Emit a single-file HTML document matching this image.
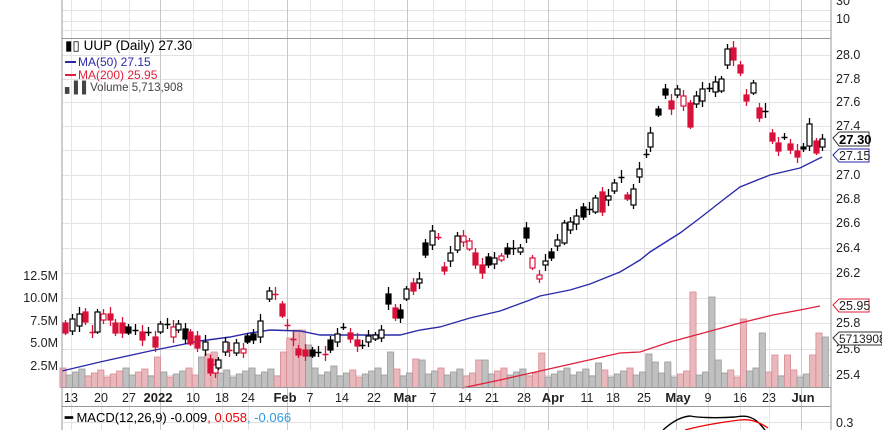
<!DOCTYPE html>
<html><head><meta charset="utf-8">
<style>
html,body{margin:0;padding:0;background:#fff;}
body{width:882px;height:430px;overflow:hidden;position:relative;font-family:"Liberation Sans",Arial,sans-serif;}
svg{position:absolute;left:0;top:0;}
text{font-family:"Liberation Sans",Arial,sans-serif;}
</style></head><body>
<svg id="s" width="882" height="430" viewBox="0 0 882 430" xmlns="http://www.w3.org/2000/svg">
<rect width="882" height="430" fill="#fff"/>
<g id="grid"></g>
<g id="vol"></g>
<polyline fill="none" stroke="#2a2aa8" stroke-width="1.4" points="62,371 100,362 150,351 200,341 230,337 250,333 270,330 300,331 320,335 350,335 380,335 400,335 420,330 440,327 470,318 500,311 530,300 540,296 570,290 590,284 620,272 640,260 650,252 680,233 700,218 723,200 740,187 770,175 800,168 822,157"/>
<polyline fill="none" stroke="#e0203c" stroke-width="1.3" points="462,388 500,380 540,371 580,362 620,353 640,352 670,342 707,332 740,323 773,315 800,310 820,306"/>
<g id="cand"></g>
<line x1="62" y1="0" x2="62" y2="430" stroke="#999"/>
<line x1="831" y1="0" x2="831" y2="430" stroke="#999"/>
<line x1="62" y1="38.5" x2="831" y2="38.5" stroke="#999"/>
<line x1="62" y1="387.5" x2="831" y2="387.5" stroke="#999"/>
<line x1="62" y1="406.5" x2="831" y2="406.5" stroke="#999"/>
<path d="M663,430 C672,422 680,417 690,416 C700,418 720,418 735,417 C745,415 752,416 760,424 L765,430" fill="none" stroke="#000" stroke-width="1.4"/>
<path d="M685,430 C700,426 715,423 740,420 C748,419 756,420 768,428" fill="none" stroke="#e00" stroke-width="1.3"/>
<g font-size="12.5">
<text x="65" y="50" fill="#000" font-size="13.5">▮▯ UUP (Daily) 27.30</text>
<line x1="65" y1="62" x2="76" y2="62" stroke="#2a2aa8" stroke-width="2"/>
<text x="78" y="66" fill="#2a2aa8" font-size="12">MA(50) 27.15</text>
<line x1="65" y1="75" x2="76" y2="75" stroke="#e0203c" stroke-width="2"/>
<text x="78" y="79" fill="#e0203c" font-size="12">MA(200) 25.95</text>
<text x="65" y="91" fill="#444" font-size="11.5">▖▌▌Volume 5,713,908</text>
</g>
<text x="65" y="422" font-size="13" fill="#000"><tspan font-weight="bold">━</tspan> MACD(12,26,9) -0.009<tspan fill="#e00">, 0.058</tspan><tspan fill="#3399dd">, -0.066</tspan></text>
<g font-size="12.5" fill="#222">
<text x="836" y="5">30</text><text x="836" y="23">10</text>
<text x="836" y="59">28.0</text><text x="836" y="83">27.8</text><text x="836" y="106">27.6</text><text x="836" y="130">27.4</text>
<text x="836" y="179">27.0</text><text x="836" y="203">26.8</text><text x="836" y="227">26.6</text><text x="836" y="252">26.4</text>
<text x="836" y="277">26.2</text><text x="836" y="327">25.8</text><text x="836" y="353">25.6</text><text x="836" y="379">25.4</text>
<text x="836" y="427">0.3</text>
</g>
<path d="M833,138 L839,132 L869,132 L869,146 L839,146 Z" fill="#fff" stroke="#333"/>
<text x="839" y="144" font-size="13" font-weight="bold">27.30</text>
<path d="M833,155 L839,149 L869,149 L869,162 L839,162 Z" fill="#fff" stroke="#2a2aa8"/>
<text x="839" y="160" font-size="12.5" fill="#222">27.15</text>
<path d="M833,305 L839,299 L869,299 L869,312 L839,312 Z" fill="#fff" stroke="#e0203c"/>
<text x="839" y="310" font-size="12.5" fill="#222">25.95</text>
<path d="M833,338 L839,332 L882,332 L882,345 L839,345 Z" fill="#fff" stroke="#333"/>
<text x="839" y="343" font-size="12" fill="#222">5713908</text>
<g font-size="12.5" fill="#222" text-anchor="end">
<text x="58" y="280">12.5M</text><text x="58" y="302">10.0M</text><text x="58" y="325">7.5M</text><text x="58" y="347">5.0M</text><text x="58" y="370">2.5M</text>
</g>
<g font-size="12.5" fill="#222" text-anchor="middle">
<text x="71" y="402">13</text><text x="101" y="402">20</text><text x="129" y="402">27</text>
<text x="158" y="402" font-weight="bold" font-size="13">2022</text>
<text x="193" y="402">10</text><text x="222" y="402">18</text><text x="248" y="402">24</text>
<text x="285" y="402" font-weight="bold" font-size="13">Feb</text>
<text x="310" y="402">7</text><text x="342" y="402">14</text><text x="374" y="402">22</text>
<text x="405" y="402" font-weight="bold" font-size="13">Mar</text>
<text x="433" y="402">7</text><text x="465" y="402">14</text><text x="492" y="402">21</text><text x="524" y="402">28</text>
<text x="553" y="402" font-weight="bold" font-size="13">Apr</text>
<text x="587" y="402">11</text><text x="613" y="402">18</text><text x="644" y="402">25</text>
<text x="678" y="402" font-weight="bold" font-size="13">May</text>
<text x="708" y="402">9</text><text x="740" y="402">16</text><text x="769" y="402">23</text>
<text x="803" y="402" font-weight="bold" font-size="13">Jun</text>
</g>
</svg>
<script>
(function(){
var NS="http://www.w3.org/2000/svg";
function el(p,n,a){var e=document.createElementNS(NS,n);for(var k in a)e.setAttribute(k,a[k]);p.appendChild(e);return e;}
var g=document.getElementById('grid');
[10,21,30,55,79,102,126,150,175,199,223,248,273,298,323,349,375,422].forEach(function(y){el(g,'line',{x1:62,x2:831,y1:y+.5,y2:y+.5,stroke:'#e2e2e2'});});
[71,101,129,193,222,248,310,342,374,433,465,492,524,587,613,644,708,740,769].forEach(function(x){el(g,'line',{x1:x+.5,x2:x+.5,y1:0,y2:430,stroke:'#e4e4e4'});});
[160,287,407,548,676,801].forEach(function(x){el(g,'line',{x1:x+.5,x2:x+.5,y1:0,y2:430,stroke:'#c8c8c8'});});
var C=[[65,328,5,'r'],[72,325,6,'h'],[79,320,6,'h'],[85,317,5,'r'],[92,332,1,'rc'],[97,322,10,'h'],[103,317,3,'rh'],[110,317,3,'r'],[115,328,5,'r'],[122,328,5,'r'],[128,330,3,'b'],[135,330,1,'c'],[142,336,4,'r'],[148,332,1,'c'],[155,342,5,'r'],[160,328,4,'h'],[167,324,1,'c'],[173,332,5,'rh'],[178,327,3,'h'],[185,334,5,'b'],[190,338,6,'r'],[197,342,6,'r'],[205,346,4,'h'],[210,366,7,'r'],[215,369,4,'rh'],[218,364,4,'h'],[225,347,5,'h'],[229,350,1,'rc'],[236,348,5,'h'],[243,351,2,'rh'],[247,339,3,'b'],[253,337,3,'b'],[260,329,8,'h'],[269,295,4,'h'],[275,294,1,'rc'],[282,310,6,'r'],[287,325,1,'rc'],[293,339,1,'rc'],[298,352,3,'r'],[305,353,3,'r'],[312,353,3,'b'],[318,352,1,'c'],[325,354,1,'rc'],[330,345,5,'b'],[337,338,4,'h'],[343,327,1,'c'],[350,336,3,'r'],[357,343,3,'r'],[362,345,1,'c'],[368,339,3,'h'],[375,337,2,'h'],[381,334,4,'h'],[388,299,5,'b'],[395,313,5,'r'],[400,314,4,'b'],[406,294,5,'h'],[413,287,4,'r'],[419,281,2,'h'],
[425,249,6,'b'],[432,238,7,'h'],[438,237,1,'rc'],[444,269,2,'r'],[450,257,4,'h'],[457,243,7,'h'],[463,239,3,'rh'],[469,245,4,'rh'],[475,259,6,'r'],[482,269,4,'r'],[488,261,4,'b'],[494,261,3,'h'],[501,258,2,'rh'],[507,251,3,'b'],[513,248,1,'c'],[520,250,2,'h'],[526,233,5,'b'],[532,263,5,'rh'],[539,277,2,'rh'],[545,263,2,'h'],[551,255,3,'b'],[557,243,3,'h'],[564,233,10,'h'],[570,226,4,'h'],[576,220,4,'h'],[583,212,5,'b'],[589,209,1,'c'],[595,205,7,'h'],[602,202,10,'r'],[608,198,2,'h'],[614,187,4,'h'],[621,177,1,'c'],[627,197,2,'r'],[633,197,8,'h'],[639,173,4,'h'],[646,154,1,'c'],
[650,140,7,'h'],[658,112,3,'b'],[665,92,3,'b'],[671,105,4,'r'],[677,92,3,'h'],[683,101,5,'rh'],[690,115,12,'r'],[696,100,4,'h'],[702,95,6,'h'],[709,88,1,'c'],[715,87,5,'h'],[721,85,6,'h'],[727,57,8,'h'],[733,54,6,'r'],[740,69,4,'r'],[746,98,3,'r'],[753,88,5,'h'],[759,113,5,'r'],[765,111,1,'c'],[772,137,4,'r'],[778,147,4,'r'],[784,137,1,'c'],[790,147,3,'r'],[797,154,3,'r'],[803,148,1,'b'],[809,135,11,'h'],[816,147,6,'r'],[822,143,4,'h']];
var V={160:357,165:372,203:357,210:354,215:352,283:352,290:338,295:330,302:330,308:345,333:366,388:352,418:359,425:360,482:360,541:353,601:363,652:354,658:362,669:362,690:292,714:297,720:360,746:319,760:333,775:355,787:355,812:355,818:333,823:337};
var vg=document.getElementById('vol');
for(var i=0;i<122;i++){var x=63+i*6.3;var vt=368+((i*37)%10);
 var best=null,bd=9;for(var k in V){var d=Math.abs(+k-x);if(d<bd){bd=d;best=k;}}
 if(best!==null&&bd<3.2)vt=V[best];
 var near=C[0],nd=99;for(var j=0;j<C.length;j++){var dd=Math.abs(C[j][0]-x);if(dd<nd){nd=dd;near=C[j];}}
 var red=near[3].charAt(0)=='r';
 el(vg,'rect',{x:x-3.1,y:vt,width:6.2,height:387.5-vt,fill:red?'#e9b8bd':'#c0c0c0',stroke:red?'#d88a92':'#9a9a9a','stroke-width':0.8});
}
var cg=document.getElementById('cand'),RED='#d8103a';
C.forEach(function(c,i){var x=c[0],y=c[1],h=c[2],t=c[3];var col=t.charAt(0)=='r'?RED:'#000';
 var ext=3+((i*7)%5);
 el(cg,'line',{x1:x+.5,x2:x+.5,y1:y-h-ext,y2:y+h+ext-1,stroke:col,'stroke-width':1.3});
 if(t=='c'||t=='rc'){el(cg,'line',{x1:x-2.5,x2:x+3.5,y1:y+.5,y2:y+.5,stroke:col,'stroke-width':1.5});}
 else{var fill=(t=='r'?RED:(t=='b'?'#000':'#fff'));el(cg,'rect',{x:x-2,y:y-h,width:5,height:Math.max(2*h,2),fill:fill,stroke:col,'stroke-width':1.2});}
});
})();
</script>
</body></html>
